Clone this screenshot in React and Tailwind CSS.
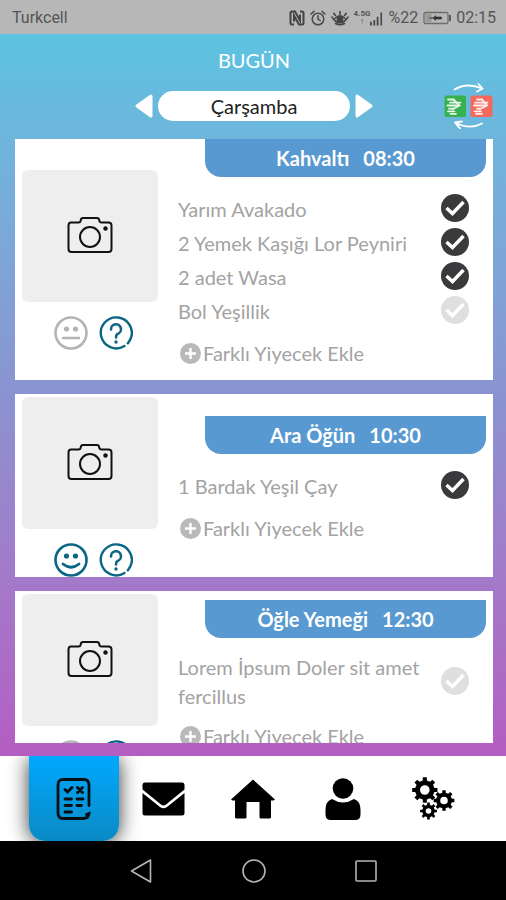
import { useState } from 'react';
import { cva } from 'class-variance-authority';
import clsx from 'clsx';

const meals = [
  {
    id: 'kahvalti',
    title: 'Kahvaltı',
    time: '08:30',
    mood: 'neutral',
    photoGap: 'pt-[31px]',
    titleGap: 'pt-0',
    items: [
      { name: 'Yarım Avakado', done: true },
      { name: '2 Yemek Kaşığı Lor Peyniri', done: true },
      { name: '2 adet Wasa', done: true },
      { name: 'Bol Yeşillik', done: false },
    ],
  },
  {
    id: 'ara-ogun',
    title: 'Ara Öğün',
    time: '10:30',
    mood: 'happy',
    photoGap: 'pt-[3px]',
    titleGap: 'pt-[22px]',
    items: [{ name: '1 Bardak Yeşil Çay', done: true }],
  },
  {
    id: 'ogle-yemegi',
    title: 'Öğle Yemeği',
    time: '12:30',
    mood: 'neutral',
    photoGap: 'pt-[3px]',
    titleGap: 'pt-[9px]',
    items: [{ name: 'Lorem İpsum Doler sit amet fercillus', done: false }],
  },
];

const days = ['Pazartesi', 'Salı', 'Çarşamba', 'Perşembe', 'Cuma', 'Cumartesi', 'Pazar'];

/* ---------- status bar ---------- */

const StatusBar = () => (
  <div className="flex h-[34px] shrink-0 items-center justify-between bg-[#b7b7b7] pl-3 pr-[10px] pt-[2px] font-[Roboto,sans-serif] text-base text-[#555]">
    <span>Turkcell</span>
    <div className="flex items-center gap-[5px]">
      <svg width="16" height="16" viewBox="0 0 16 16" fill="none" stroke="#444">
        <path d="M5 14.500H3Q1.500 14.500 1.500 13V3Q1.500 1.500 3 1.500H6L11 10.500V4.500" strokeWidth="2" />
        <path d="M11 1.500H13Q14.500 1.500 14.500 3V13Q14.500 14.500 13 14.500H10L5 5.500V11.500" strokeWidth="2" />
      </svg>
      <svg width="16" height="16" viewBox="0 0 16 16" fill="none" stroke="#4a4a4a" strokeWidth="1.500" strokeLinecap="round">
        <circle cx="8" cy="9" r="5.800" />
        <path d="M8 5.800V9L10.200 10.500M1 4L4 1.400M15 4L12 1.400" />
      </svg>
      <svg width="18" height="16" viewBox="0 0 18 16" fill="none" stroke="#444" strokeWidth="1.600" strokeLinecap="round">
        <path d="M1 7Q2.500 10 5 11.500Q9 14 13 11.500Q15.500 10 17 7M4 8.500Q9 3 14 8.500M4.500 13.500Q9 16 13.500 13.500" />
        <circle cx="9" cy="9.500" r="2.600" fill="#444" />
        <path d="M9 4.500V1.500M4.500 5.500L2.800 3.300M13.500 5.500L15.200 3.300" />
      </svg>
      <div className="flex items-end">
        <span className="flex flex-col items-center text-[8px] font-bold leading-[8px] text-[#555]">
          <span>4.5G</span>
          <span>↑</span>
        </span>
        <svg width="13" height="15" viewBox="0 0 14 15" fill="#4a4a4a">
          <path d="M0 11h2v4H0zM3.600 9h2v6h-2zM7.200 5.500h2V15h-2zM11.200 1h1.800v14h-1.800z" />
        </svg>
      </div>
      <span>%22</span>
      <svg width="28" height="14" viewBox="0 0 28 14" fill="none">
        <rect x="1" y="1.500" width="24" height="11" rx="1.500" stroke="#6b6b6b" strokeWidth="1.300" />
        <rect x="2.500" y="3" width="6" height="8" fill="#999" />
        <path d="M6.500 7H10L12.500 4.500V6H18.500V8H12.500V9.500L10 7Z" fill="#333" stroke="#333" strokeWidth="0.600" />
        <path d="M27 4V10" stroke="#444" strokeWidth="1.600" />
      </svg>
      <span>02:15</span>
    </div>
  </div>
);

/* ---------- day header ---------- */

const SwapIcon = () => (
  <svg width="49" height="46" viewBox="0 0 49 46" fill="none">
    <rect x="0.500" y="12.500" width="21.500" height="21.500" rx="2" fill="#37b04f" />
    <rect x="26.500" y="12.500" width="22" height="21.500" rx="2" fill="#f4695c" />
    <g stroke="#e8f6ea" strokeWidth="1.800" strokeLinecap="round">
      <path d="M4 16.500H9.500M6 19.700H16.500M3.500 22.500H14M5 25.700H9M4 28.300H10.500M6.500 30.800H12" />
      <path d="M9.500 16.500L15.500 22.500L9 26" />
    </g>
    <g stroke="#fff0ee" strokeWidth="1.800" strokeLinecap="round">
      <path d="M33 16.500H38M31 19.700H43.500M30 22.500H41M33 25.700H36M30.500 28.300H37M32 30.800H38" />
      <path d="M38 16.500L43 22.500L36 26" />
    </g>
    <g stroke="#fff" strokeWidth="1.800" strokeLinecap="round" strokeLinejoin="round">
      <path d="M10.500 6.500Q23 -1 38 5.500M34.500 1L38.500 5.700L33 8.500" />
      <path d="M38 40.500Q26 47 12 40M16 45.500L11 39.500L18 38.500" />
    </g>
  </svg>
);

const DayArrow = ({ label, path, onClick }) => (
  <button type="button" aria-label={label} onClick={onClick}>
    <svg width="18" height="24" viewBox="0 0 18 24" fill="#fff" stroke="#fff" strokeWidth="3" strokeLinejoin="round">
      <path d={path} />
    </svg>
  </button>
);

const DayHeader = () => {
  const [day, setDay] = useState(2);
  const move = (step) => setDay((day + step + days.length) % days.length);

  return (
    <header className="pt-3">
      <h1 className="text-center text-xl leading-7 text-white">BUGÜN</h1>
      <div className="mt-[9px] grid grid-cols-[1fr_auto_1fr] items-center">
        <span />
        <div className="flex items-center gap-[5px]">
          <DayArrow label="Önceki gün" path="M2 12L16 2V22Z" onClick={() => move(-1)} />
          <div className="flex h-[30px] w-[192px] items-center justify-center rounded-full bg-white text-xl text-[#222]">
            {days[day]}
          </div>
          <DayArrow label="Sonraki gün" path="M2 2V22L16 12Z" onClick={() => move(1)} />
        </div>
        <button type="button" aria-label="Değiştir" className="justify-self-end">
          <SwapIcon />
        </button>
      </div>
    </header>
  );
};

/* ---------- meal card ---------- */

const CameraIcon = () => (
  <svg width="46" height="38" viewBox="0 0 46 38" fill="none" stroke="#111" strokeWidth="2">
    <path
      strokeLinejoin="round"
      d="M4 6.500H11.500Q13.500 6.500 13.700 4.500Q14 2 16 2H30Q32 2 32.300 4.500Q32.500 6.500 34.500 6.500H41.500Q44.500 6.500 44.500 9.500V33Q44.500 36 41.500 36H4.500Q1.500 36 1.500 33V9.500Q1.500 6.500 4 6.500Z"
    />
    <circle cx="23" cy="21" r="10" />
    <circle cx="38.500" cy="12.500" r="2.200" fill="#111" stroke="none" />
  </svg>
);

const MoodIcon = ({ mood }) => {
  const happy = mood === 'happy';
  const color = happy ? '#0b6683' : '#b4b4b4';
  return (
    <svg width="34" height="34" viewBox="0 0 34 34" fill="none" stroke={color} strokeLinecap="round">
      <circle cx="17" cy="17" r="15.500" strokeWidth="2.600" />
      <circle cx="12.500" cy="13" r="2.600" fill={color} stroke="none" />
      <circle cx="21.500" cy="13" r="2.600" fill={color} stroke="none" />
      {happy ? (
        <path d="M9 21Q17 27.500 25 21" strokeWidth="2.800" />
      ) : (
        <path d="M9 22H25" strokeWidth="2.400" />
      )}
    </svg>
  );
};

const HelpIcon = () => (
  <svg width="34" height="34" viewBox="0 0 34 34" fill="none" stroke="#0b6683" strokeLinecap="round">
    <path d="M25.500 30A15.500 15.500 0 1 1 31.300 23.500L28.800 27.300" strokeWidth="2.400" strokeLinejoin="round" />
    <path d="M12 13.500A5 5 0 1 1 18.500 18Q17 18.800 17 21.500" strokeWidth="2.600" />
    <circle cx="17" cy="26" r="1.700" fill="#0b6683" stroke="none" />
  </svg>
);

const checkStyles = cva('h-7 w-7 cursor-pointer appearance-none rounded-full', {
  variants: {
    done: { true: 'bg-[#3a3a3c]', false: 'bg-[#dfdfdf]' },
  },
});

const FoodItem = ({ item }) => {
  const [done, setDone] = useState(item.done);
  return (
    <li>
      <label className="flex min-h-[34px] items-center justify-between gap-5">
        <span>{item.name}</span>
        <span className="relative flex shrink-0 pb-[3px]">
          <input
            type="checkbox"
            checked={done}
            onChange={() => setDone(!done)}
            className={checkStyles({ done })}
          />
          <svg
            className="pointer-events-none absolute left-0 top-0"
            width="28"
            height="28"
            viewBox="0 0 28 28"
            fill="none"
            stroke="#fff"
            strokeWidth="3.400"
          >
            <path d="M5.500 14L11.500 19.500L22.500 8" />
          </svg>
        </span>
      </label>
    </li>
  );
};

const MealCard = ({ meal }) => (
  <article className="flex shrink-0 bg-white px-[7px]">
    <div className={clsx('w-[136px] shrink-0', meal.photoGap)}>
      <button
        type="button"
        aria-label="Fotoğraf ekle"
        className="flex h-[132px] w-full items-center justify-center rounded-md bg-[#eee] pb-[2px]"
      >
        <CameraIcon />
      </button>
      <div className="mt-[14px] flex justify-center gap-[11px] pl-[7px]">
        <button type="button" aria-label="Ruh hali">
          <MoodIcon mood={meal.mood} />
        </button>
        <button type="button" aria-label="Yardım">
          <HelpIcon />
        </button>
      </div>
    </div>

    <div className={clsx('min-w-0 flex-1 pb-[10px]', meal.titleGap)}>
      <h2 className="ml-[47px] flex h-[38px] items-center justify-center gap-[14px] rounded-b-2xl bg-[#5899d1] text-xl font-bold text-white">
        <span>{meal.title}</span>
        <span>{meal.time}</span>
      </h2>
      <div className="pl-5 pr-[17px] pt-[15px] text-xl leading-[29px] text-[#a3a3a3]">
        <ul>
          {meal.items.map((item) => (
            <FoodItem key={item.name} item={item} />
          ))}
        </ul>
        <button type="button" className="mt-2 flex h-[34px] items-center gap-[2px] pl-[2px]">
          <svg width="21" height="21" viewBox="0 0 21 21">
            <circle cx="10.500" cy="10.500" r="10.500" fill="#b9b9b9" />
            <path d="M10.500 5V16M5 10.500H16" stroke="#fff" strokeWidth="2.400" />
          </svg>
          Farklı Yiyecek Ekle
        </button>
      </div>
    </div>
  </article>
);

/* ---------- bottom navigation ---------- */

const ListIcon = () => (
  <svg width="36" height="42" viewBox="0 0 36 42" fill="none" stroke="#0a0f14" strokeLinecap="round">
    <path d="M33 27.500V7Q33 1.500 28 1.500H7Q2 1.500 2 7V35Q2 40.500 7 40.500H27Q32.500 40.500 33 35.500L30.500 36.500" strokeWidth="2.800" />
    <path d="M9 11.500L11.500 14L16 9.500" strokeWidth="3" />
    <path d="M21.500 9.500L26.500 14.500M26.500 9.500L21.500 14.500" strokeWidth="3" />
    <path d="M9 21H15.500M21 21H27M9 27.500H15.500M21 27.500H25.500M9 34H15.500" strokeWidth="2.800" />
  </svg>
);

const MailIcon = () => (
  <svg width="43" height="34" viewBox="0 0 43 34" fill="#000">
    <path d="M3 0.500H40Q42.500 0.500 42.500 3V7.500L24 22.500Q21.500 24.500 19 22.500L0.500 7.500V3Q0.500 0.500 3 0.500Z" />
    <path d="M0.500 11L18 25Q21.500 27.500 25 25L42.500 11V31Q42.500 33.500 40 33.500H3Q0.500 33.500 0.500 31Z" />
  </svg>
);

const HomeIcon = () => (
  <svg width="44" height="40" viewBox="0 0 44 40" fill="#000">
    <path d="M22 0.500L44 20.500L42.500 21.500H40V38Q40 39.500 38.500 39.500H30Q28.500 39.500 28.500 38V23H15.500V38Q15.500 39.500 14 39.500H5.500Q4 39.500 4 38V21.500H1.500L0 20.500Z" />
  </svg>
);

const PersonIcon = () => (
  <svg width="36" height="42" viewBox="0 0 36 42" fill="#000">
    <circle cx="18" cy="10.500" r="10.300" />
    <path d="M7 21Q18 28 29 21Q35.500 23 35.500 32V36.500Q35.500 42 30 42H6Q0.500 42 0.500 36.500V32Q0.500 23 7 21Z" />
  </svg>
);

const gearPath = (cx, cy, outer, inner, hole, teeth) => {
  const step = (Math.PI * 2) / teeth;
  const points = [];
  for (let i = 0; i < teeth; i += 1) {
    const mid = i * step - Math.PI / 2;
    [
      [inner, -0.27],
      [outer, -0.2],
      [outer, 0.2],
      [inner, 0.27],
    ].forEach(([r, offset]) => {
      const angle = mid + offset * step;
      points.push(`${cx + r * Math.cos(angle)} ${cy + r * Math.sin(angle)}`);
    });
  }
  return `M${points.join('L')}ZM${cx - hole} ${cy}a${hole} ${hole} 0 1 0 ${hole * 2} 0a${hole} ${hole} 0 1 0 ${-hole * 2} 0Z`;
};

const GearsIcon = () => (
  <svg width="43" height="43" viewBox="0 0 43 43" fill="#000" fillRule="evenodd">
    <path d={gearPath(12.8, 13, 12.8, 9.8, 4.8, 8)} />
    <path d={gearPath(32, 23.5, 10.5, 8, 3.8, 8)} />
    <path d={gearPath(16.5, 34, 8.5, 6.3, 2.8, 8)} />
  </svg>
);

const tabs = [
  { label: 'Liste', Icon: ListIcon },
  { label: 'Mesajlar', Icon: MailIcon },
  { label: 'Ana sayfa', Icon: HomeIcon },
  { label: 'Profil', Icon: PersonIcon },
  { label: 'Ayarlar', Icon: GearsIcon },
];

const TabBar = () => (
  <nav className="flex h-[85px] shrink-0 overflow-hidden bg-white pl-[29px] pr-7">
    {tabs.map(({ label, Icon }, index) => (
      <a
        key={label}
        href="#"
        aria-label={label}
        className={clsx(
          'flex flex-1 items-center justify-center',
          index === 0 &&
            'rounded-b-2xl bg-linear-to-b from-[#00a8ff] to-[#0a8ac4] shadow-[0_2px_20px_rgba(0,0,0,0.8)]'
        )}
      >
        <Icon />
      </a>
    ))}
  </nav>
);

const SystemBar = () => (
  <div className="flex h-[59px] shrink-0 items-center justify-center gap-[88px] bg-black pl-[2px]">
    <button type="button" aria-label="Geri">
      <svg width="24" height="24" viewBox="0 0 24 24" fill="none" stroke="#b5b5b5" strokeWidth="1.600" strokeLinejoin="round">
        <path d="M1.500 12L20.500 1V23Z" />
      </svg>
    </button>
    <button type="button" aria-label="Ana ekran">
      <svg width="24" height="24" viewBox="0 0 24 24" fill="none" stroke="#b5b5b5" strokeWidth="1.600">
        <circle cx="12" cy="12" r="11" />
      </svg>
    </button>
    <button type="button" aria-label="Son uygulamalar">
      <svg width="24" height="24" viewBox="0 0 24 24" fill="none" stroke="#b5b5b5" strokeWidth="1.600">
        <rect x="2" y="2" width="20" height="20" rx="1" />
      </svg>
    </button>
  </div>
);

const App = () => (
  <div className="flex h-screen flex-col font-[Lato,sans-serif]">
    <StatusBar />
    <main className="flex min-h-0 flex-1 flex-col bg-linear-to-b from-[#5bc3e0] via-[#8a93d1] to-[#b45dc2] pb-[13px] pl-[15px] pr-[13px]">
      <DayHeader />
      <section className="mt-[10px] flex min-h-0 flex-1 flex-col gap-[14px] overflow-hidden">
        {meals.map((meal) => (
          <MealCard key={meal.id} meal={meal} />
        ))}
      </section>
    </main>
    <TabBar />
    <SystemBar />
  </div>
);

export default App;
